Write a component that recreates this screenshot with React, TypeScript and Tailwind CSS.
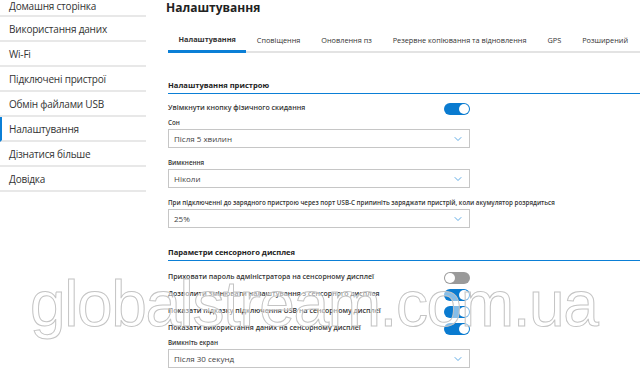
import { ChevronDown } from "lucide-react";

const navItems = [
  "Домашня сторінка",
  "Використання даних",
  "Wi-Fi",
  "Підключені пристрої",
  "Обмін файлами USB",
  "Налаштування",
  "Дізнатися більше",
  "Довідка",
];

const tabs = [
  "Налаштування",
  "Сповіщення",
  "Оновлення пз",
  "Резервне копіювання та відновлення",
  "GPS",
  "Розширений",
];

const Toggle = ({ on }: { on: boolean }) => (
  <span
    className={`relative inline-block w-[26px] h-[12px] rounded-full ${on ? "bg-[#0a7bd0]" : "bg-[#9a9a9a]"}`}
  >
    <span
      className={`absolute top-[1px] w-[10px] h-[10px] rounded-full bg-white ${on ? "right-[1px]" : "left-[1px]"}`}
    />
  </span>
);

const ToggleRow = ({ label, on }: { label: string; on: boolean }) => (
  <div className="flex items-center w-[302px] h-[17px] justify-between">
    <span className="text-[7px] font-semibold text-[#333] whitespace-nowrap">{label}</span>
    <Toggle on={on} />
  </div>
);

const FieldLabel = ({ text }: { text: string }) => (
  <div className="h-[12px] leading-[12px] text-[6.25px] font-semibold text-[#333] whitespace-nowrap">{text}</div>
);

const SelectBox = ({ value }: { value: string }) => (
  <div className="w-[302px] h-[19px] border border-[#c6c6c6] flex items-center justify-between pl-[5px] pr-[5px]">
    <span className="text-[8px] text-[#444]">{value}</span>
    <ChevronDown size={12} strokeWidth={1.5} className="text-[#2b8fdc]" />
  </div>
);

const Select = ({ label, value }: { label: string; value: string }) => (
  <div className="w-[302px]">
    <FieldLabel text={label} />
    <SelectBox value={value} />
  </div>
);

const SectionHeading = ({ title }: { title: string }) => (
  <div className="h-[14px] leading-[14px] text-[7.6px] font-bold text-[#222] pb-[1px] box-content border-b border-[#0b7fd6]">
    {title}
  </div>
);

export default function App() {
  return (
    <div className="relative w-[640px] h-[368px] overflow-hidden bg-white flex font-['Open_Sans',sans-serif] text-[#333]">
      <aside className="w-[146px] shrink-0 -mt-[3px]">
        {navItems.map((item, i) => (
          <div
            key={item}
            className={`${i === 0 ? "h-[20px]" : "h-[25px]"} flex items-center pt-[1px] border-b-2 border-[#e8e8e8] text-[10px] tracking-[-0.2px] ${item === "Налаштування" ? "border-l-2 border-l-[#0b7fd6] pl-[7px]" : "pl-[9px]"}`}
          >
            {item}
          </div>
        ))}
      </aside>

      <main className="flex-1 pl-[22px]">
        <h1 className="-ml-[2px] -mt-[1px] h-[18px] leading-[18px] text-[12px] font-bold text-[#222]">Налаштування</h1>

        <div className="mt-[10px] h-[26px] flex border-b-2 border-[#e3e3e3]">
          {tabs.map((tab, i) => (
            <div
              key={tab}
              className={`px-[10.5px] pt-[2px] flex items-center whitespace-nowrap text-[7.3px] text-[#333] ${i === 0 ? "font-bold border-b-[3px] border-[#0b7fd6] -mb-[2px]" : ""}`}
            >
              {tab}
            </div>
          ))}
        </div>

        <div className="mt-[25px]">
          <SectionHeading title="Налаштування пристрою" />
          <div className="mt-[6px]">
            <ToggleRow label="Увімкнути кнопку фізичного скидання" on />
          </div>
          <div className="mt-0">
            <Select label="Сон" value="Після 5 хвилин" />
          </div>
          <div className="mt-[9px]">
            <Select label="Вимкнення" value="Ніколи" />
          </div>
          <div className="mt-[9px]">
            <FieldLabel text="При підключенні до зарядного пристрою через порт USB-C припиніть заряджати пристрій, коли акумулятор розрядиться" />
            <SelectBox value="25%" />
          </div>
        </div>

        <div className="mt-[17px]">
          <SectionHeading title="Параметри сенсорного дисплея" />
          <div className="mt-[8px]">
            <ToggleRow label="Приховати пароль адміністратора на сенсорному дисплеї" on={false} />
            <ToggleRow label="Дозволити змінювати налаштування з сенсорного дисплея" on />
            <ToggleRow label="Показати підказку підключення USB на сенсорному дисплеї" on />
            <ToggleRow label="Показати використання даних на сенсорному дисплеї" on />
          </div>
          <div className="mt-0">
            <Select label="Вимкніть екран" value="Після 30 секунд" />
          </div>
        </div>
      </main>

      <div className="absolute left-[30px] top-[268px] pointer-events-none whitespace-nowrap font-['Liberation_Sans',sans-serif] text-[64px] leading-[72px] tracking-[-1.4px] text-white/50 [-webkit-text-stroke:1px_#c4c4c4]">
        globalstream.com.ua
      </div>
    </div>
  );
}
